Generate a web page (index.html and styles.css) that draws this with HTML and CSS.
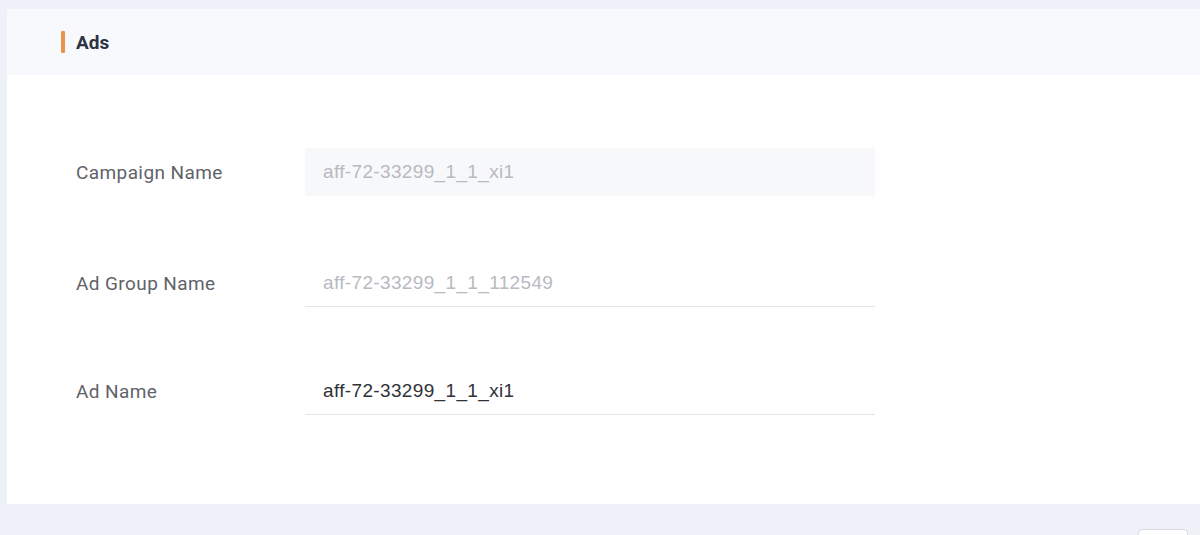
FILE: index.html
```html
<!DOCTYPE html>
<html>
<head>
<meta charset="utf-8">
<link rel="stylesheet" href="styles.css">
</head>
<body>
<div class="page">
  <section class="card">
    <header class="card-head">
      <span class="bar"></span>
      <h2 class="title">Ads</h2>
    </header>
    <div class="card-body">
      <div class="row">
        <label class="label">Campaign Name</label>
        <div class="field field-disabled"><span class="value muted">aff-72-33299_1_1_xi1</span></div>
      </div>
      <div class="row row-second">
        <label class="label">Ad Group Name</label>
        <div class="field field-line"><span class="value muted">aff-72-33299_1_1_112549</span></div>
      </div>
      <div class="row row-third">
        <label class="label">Ad Name</label>
        <div class="field field-line"><span class="value">aff-72-33299_1_1_xi1</span></div>
      </div>
    </div>
  </section>
  <div class="footer">
    <span class="btn-edge"></span>
  </div>
</div>
</body>
</html>
```
FILE: styles.css
```css
* { box-sizing: border-box; }
html, body { margin: 0; padding: 0; }
body {
  background: #eef1f7;
  font-family: Roboto, "Liberation Sans", Arial, sans-serif;
  width: 1200px;
  height: 535px;
  overflow: hidden;
}
.page {
  padding: 9px 0 0 7px;
}
.card {
  background: #ffffff;
  height: 495px;
}
.card-head {
  height: 66px;
  background: #f8f9fc;
  display: flex;
  align-items: center;
  padding-left: 54px;
}
.bar {
  width: 4px;
  height: 22px;
  background: #e8954e;
  border-radius: 1px;
  margin-right: 11px;
}
.title {
  margin: 0;
  font-size: 19px;
  font-weight: 700;
  color: #2c3342;
}
.card-body {
  padding: 73px 0 0 69px;
  display: flex;
  flex-direction: column;
}
.row {
  display: flex;
  align-items: center;
  height: 48px;
}
.row-second { margin-top: 63px; }
.row-third { margin-top: 60px; }
.label {
  width: 229px;
  font-size: 19px;
  letter-spacing: 0.4px;
  color: #5f6369;
}
.field {
  width: 570px;
  height: 48px;
  display: flex;
  align-items: center;
  padding-left: 18px;
}
.field-disabled {
  background: #f7f8fa;
}
.field-line {
  border-bottom: 1px solid #e3e4e8;
}
.value {
  font-size: 19px;
  letter-spacing: 0.35px;
  color: #2f3238;
  font-family: "Liberation Sans", Arial, sans-serif;
}
.value.muted {
  color: #b7babf;
}
.footer {
  position: relative;
  height: 31px;
}
.btn-edge {
  position: absolute;
  right: 12px;
  top: 25px;
  width: 50px;
  height: 20px;
  border: 1px solid #d8dbe2;
  border-radius: 4px;
  background: #fff;
}
```
